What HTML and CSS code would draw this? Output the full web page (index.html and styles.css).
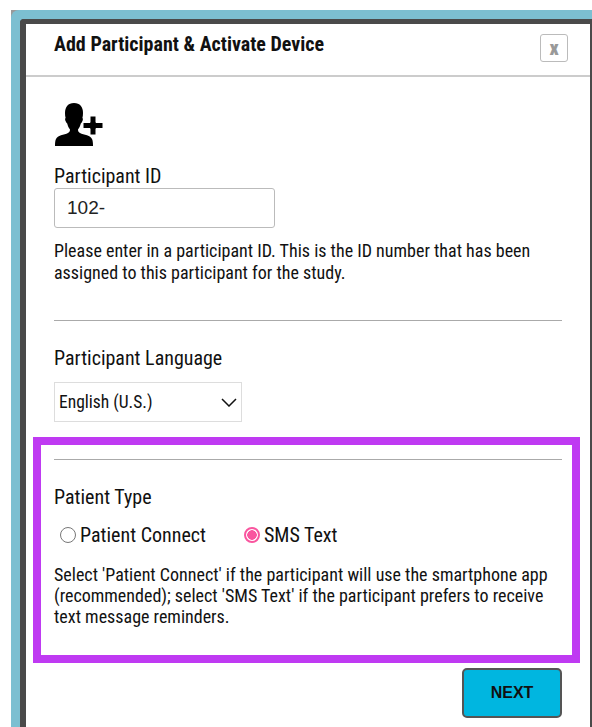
FILE: index.html
```html
<!DOCTYPE html>
<html lang="en">
<head>
<meta charset="utf-8">
<title>Add Participant &amp; Activate Device</title>
<link rel="stylesheet" href="styles.css">
</head>
<body>
<div class="frame">
<div class="backdrop">
  <div class="modal">
    <header class="modal-head">
      <h1 class="modal-title">Add Participant &amp; Activate Device</h1>
      <button class="close" type="button">x</button>
    </header>
    <div class="modal-body">
      <svg class="person-icon" viewBox="0 0 48 43" width="48" height="43" aria-hidden="true">
        <path d="M19 0C25 0 28 4 28 10C28 12 27.800 13.500 27.400 15C28.200 15.400 28 17 27.200 18.500C26.800 19.500 26.400 20.100 25.800 20.500C25.200 23 24.200 25 23 26.500C23 28 23.400 29.100 25 29.900C26.800 30.800 29.500 31.500 32 32.300C34.500 33.200 36 34.200 37 36C37.800 37.500 38 40 38 43L0 43C0 40 .2 37.500 1 36C2 34.200 3.500 33.200 6 32.300C8.500 31.500 11.200 30.800 13 29.900C14.600 29.100 15 28 15 26.500C13.800 25 12.800 23 12.200 20.500C11.600 20.100 11.200 19.500 10.800 18.500C10 17 9.800 15.400 10.600 15C10.200 13.500 10 12 10 10C10 4 13 0 19 0Z"/>
        <path d="M35 13h6v6.500h7v6h-7V32h-6v-6.500h-7v-6h7z" stroke="#fff" stroke-width="1"/>
      </svg>
      <label class="label" for="pid">Participant ID</label>
      <input class="text-input" id="pid" type="text" value="102-">
      <p class="help help-id">Please enter in a participant ID. This is the ID number that has been assigned to this participant for the study.</p>
      <hr class="rule rule-id">
      <div class="label label-lang">Participant Language</div>
      <div class="select">
        <span>English (U.S.)</span>
        <svg class="chevron" viewBox="0 0 16 9" width="16" height="9" aria-hidden="true"><path d="M1 1l7 7 7-7" fill="none" stroke="#111" stroke-width="1.500"/></svg>
      </div>
      <section class="highlight">
        <hr class="rule">
        <div class="label label-type">Patient Type</div>
        <div class="radios">
          <span class="radio-item"><span class="radio"></span>Patient Connect</span>
          <span class="radio-item"><span class="radio radio-on"></span>SMS Text</span>
        </div>
        <p class="help help-type">Select 'Patient Connect' if the participant will use the smartphone app (recommended); select 'SMS Text' if the participant prefers to receive text message reminders.</p>
      </section>
      <div class="actions"><button class="next" type="button">NEXT</button></div>
    </div>
  </div>
</div>
</div>
</body>
</html>
```
FILE: styles.css
```css
* { box-sizing: border-box; }
html, body { margin: 0; height: 100%; background: #fff; overflow: hidden; }
body { padding: 10px 0 0 11px; font-family: Roboto, "Liberation Sans", sans-serif; color: #111; }

.frame { background: #9a9a9a; }
.backdrop {
  height: 717px;
  background: #7cbfd1;
  border-top-left-radius: 8px;
  padding: 9px 0 0 9px;
}
.modal {
  height: 708px;
  background: #fff;
  border: solid #4a4a4a;
  border-width: 5px 2px 0 6px;
  border-top-left-radius: 4px;
}
.modal-head {
  height: 53px;
  border-bottom: 2px solid #ccc;
  padding: 0 22px 0 28px;
  display: flex;
  justify-content: space-between;
}
.modal-title {
  margin: 9px 0 0;
  font-size: 20px;
  line-height: 22px;
  font-weight: 700;
  font-stretch: condensed;
  color: #111;
}
.close {
  width: 28px;
  height: 28px;
  margin-top: 10px;
  padding: 0;
  background: #fff;
  border: 1px solid #bbb;
  border-radius: 3px;
  color: #999;
  font: 900 20px/24px Roboto, sans-serif;
  font-stretch: condensed;
}
.modal-body { padding: 26px 28px 0; }
.person-icon { display: block; margin-left: 1px; fill: #000; }
.label { display: block; font-size: 20px; line-height: 22px; font-stretch: condensed; }
.person-icon + .label { margin-top: 19px; }
.text-input {
  display: block;
  width: 221px;
  height: 40px;
  margin-top: 1px;
  padding: 0 12px;
  border: 1px solid #bbb;
  border-radius: 3px;
  font: 19px "Liberation Sans", sans-serif;
  color: #222;
}
.help { margin: 0; font-size: 18px; line-height: 21px; font-stretch: condensed; }
.help-id { margin-top: 12px; line-height: 22px; }
.rule { border: 0; border-top: 1px solid #aaa; margin: 0; }
.rule-id { margin-top: 36px; }
.label-lang { margin-top: 26px; }
.select {
  width: 188px;
  height: 40px;
  margin-top: 13px;
  padding: 0 4px;
  border: 1px solid #ddd;
  display: flex;
  align-items: center;
  justify-content: space-between;
  font-size: 17.500px;
  font-stretch: condensed;
}
.highlight {
  margin: 15px -82px 0 -21px;
  height: 226px;
  width: 547px;
  border: 8px solid #bf3af2;
  padding: 14px 0 0 13px;
}
.highlight .rule { width: 508px; }
.label-type { margin-top: 26px; }
.radios { display: flex; gap: 38px; margin-top: 16px; padding-left: 6px; font-size: 20px; line-height: 22px; font-stretch: condensed; }
.radio-item { display: flex; align-items: center; gap: 4px; }
.radio { width: 16px; height: 16px; border-radius: 50%; border: 1px solid #777; background: #fff; }
.radio-on { border: 2px solid #f9569f; background: radial-gradient(circle, #f9569f 0 4.500px, #fff 5px); }
.help-type { margin-top: 18px; }
.actions { display: flex; justify-content: flex-end; margin-top: 5px; }
.next {
  width: 100px;
  height: 50px;
  background: #00b6e0;
  border: 2px solid #555;
  border-radius: 5px;
  font: 700 16px "Liberation Sans", sans-serif;
  color: #111;
}
```
